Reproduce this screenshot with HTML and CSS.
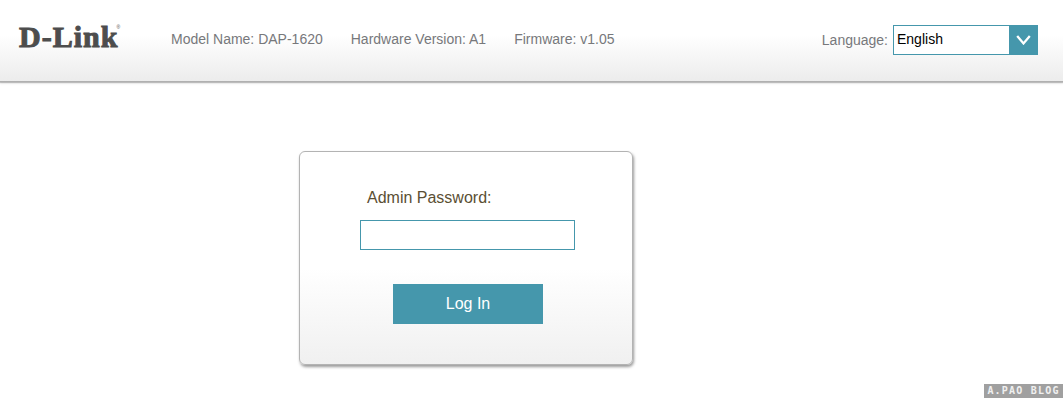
FILE: index.html
```html
<!DOCTYPE html>
<html lang="en">
<head>
<meta charset="utf-8">
<title>D-Link</title>
<link rel="stylesheet" href="styles.css">
</head>
<body>
<header class="topbar">
  <div class="logo">D-Link<sup class="reg">®</sup></div>
  <div class="info">
    <span>Model Name: DAP-1620</span>
    <span>Hardware Version: A1</span>
    <span>Firmware: v1.05</span>
  </div>
  <div class="lang">
    <span class="lang-label">Language:</span>
    <div class="select">
      <span class="select-value">English</span>
      <span class="select-btn">
        <svg class="chevron" width="15" height="10" viewBox="0 0 15 10"><path d="M1.2 1 L7.5 8.4 L13.8 1" fill="none" stroke="#fff" stroke-width="2.3"/></svg>
      </span>
    </div>
  </div>
</header>
<main class="content">
  <form class="card">
    <label class="pw-label" for="pw">Admin Password:</label>
    <input class="pw-input" id="pw" type="password">
    <button class="login" type="button">Log In</button>
  </form>
</main>
<div class="watermark">A.PAO BLOG</div>
</body>
</html>
```
FILE: styles.css
```css
* { box-sizing: border-box; }
html, body { margin: 0; padding: 0; }
body {
  width: 1063px;
  height: 403px;
  overflow: hidden;
  background: #fff;
  font-family: "Liberation Sans", Arial, sans-serif;
  position: relative;
}
.topbar {
  height: 82px;
  display: flex;
  align-items: flex-start;
  padding: 0 25px 0 19px;
  background: linear-gradient(to bottom, #fff 0, #fff 35px, #ececec 81px);
  border-bottom: 1px solid #b0b0b0;
  box-shadow: 0 1px 1px rgba(0,0,0,.22), 0 2px 2px rgba(0,0,0,.06);
}
.logo {
  width: 152px;
  margin-top: 20px;
  font-family: "Liberation Serif", serif;
  font-weight: 700;
  font-size: 30px;
  line-height: 34px;
  color: #4d4d4d;
  -webkit-text-stroke: 1px #4d4d4d;
  letter-spacing: 1px;
}
.reg {
  font-size: 5px;
  font-family: "Liberation Sans", sans-serif;
  font-weight: 400;
  letter-spacing: 0;
  -webkit-text-stroke: 0;
  vertical-align: top;
  line-height: 14px;
  margin-left: -2px;
}
.info {
  display: flex;
  gap: 28px;
  margin-top: 31px;
  font-size: 14px;
  line-height: 17px;
  color: #77787b;
}
.lang {
  margin-left: auto;
  margin-top: 25px;
  display: flex;
  align-items: flex-start;
  gap: 5px;
}
.lang-label {
  margin-top: 7px;
  font-size: 14px;
  line-height: 17px;
  color: #77787b;
}
.select {
  width: 145px;
  height: 30px;
  display: flex;
  justify-content: space-between;
  border: 1px solid #4597ac;
  background: #fff;
}
.select-value {
  padding: 5px 0 0 3px;
  font-size: 14px;
  line-height: 17px;
  color: #000;
}
.select-btn {
  width: 28px;
  display: flex;
  align-items: center;
  justify-content: center;
  background: #4597ac;
}
.content {
  padding: 69px 0 0 299px;
}
.card {
  width: 334px;
  height: 214px;
  display: flex;
  flex-direction: column;
  padding: 36px 0 0 60px;
  border: 1px solid #b3b3b3;
  border-radius: 6px;
  background: linear-gradient(to bottom, #fff 0, #fff 55%, #f0f0f0 100%);
  box-shadow: 1px 2px 3px rgba(0,0,0,.4);
}
.pw-label {
  margin-left: 7px;
  font-size: 16px;
  line-height: 20px;
  color: #5b4f34;
}
.pw-input {
  width: 215px;
  height: 30px;
  margin-top: 12px;
  border: 1px solid #4597ac;
  border-radius: 0;
  background: #fff;
  padding: 0;
}
.login {
  width: 150px;
  height: 40px;
  margin: 34px 0 0 33px;
  border: 0;
  padding: 0;
  background: #4597ac;
  color: #fff;
  font-family: inherit;
  font-size: 16px;
}
.watermark {
  position: absolute;
  right: 0;
  top: 384px;
  width: 79px;
  height: 14px;
  background: #a0a0a0;
  color: #f0f0f0;
  font-family: "DejaVu Sans Mono", monospace;
  font-weight: 700;
  font-size: 10px;
  line-height: 14px;
  text-align: center;
  letter-spacing: 1.2px;
  white-space: nowrap;
}
```
